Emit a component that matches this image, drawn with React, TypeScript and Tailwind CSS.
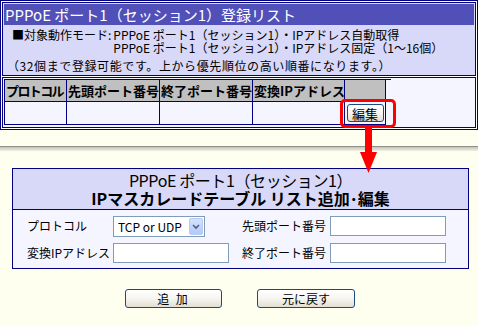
import React from "react";

function XpButton({ children, className = "" }: { children: React.ReactNode; className?: string }) {
  return (
    <div
      className={
        "flex items-center justify-center rounded-[3px] border border-[#1c4a80] bg-gradient-to-b from-white via-[#f6f5f0] to-[#e2dfd2] text-[12px] leading-none text-black " +
        className
      }
    >
      {children}
    </div>
  );
}

export default function App() {
  const headers = ["プロトコル", "先頭ポート番号", "終了ポート番号", "変換IPアドレス", ""];
  return (
    <div className="relative h-[326px] w-[478px] overflow-hidden bg-[#fffff0] font-['Noto_Sans_CJK_JP',sans-serif] text-black">
      {/* Top panel: list */}
      <div className="flex h-[130px] flex-col gap-px border border-[#000080] bg-white p-px">
        <div className="flex h-[74px] flex-col border border-[#000080] bg-[#d8d8f8] p-px">
          <div className="h-[21px] whitespace-nowrap bg-[#5050b8] pl-[1px] text-[15px] leading-[21px] text-white">
            PPPoE ポート1（セッション1）登録リスト
          </div>
          <div className="whitespace-nowrap pt-[3px] text-[12px] leading-[13px]">
            <div className="flex pl-[8px]">
              <span className="pr-[2px]">■対象動作モード:</span>
              <div className="flex flex-col">
                <span>PPPoE ポート1（セッション1）・IPアドレス自動取得</span>
                <span>PPPoE ポート1（セッション1）・IPアドレス固定（1～16個）</span>
              </div>
            </div>
            <div className="mt-[5px] pl-[3px] tracking-[0.6px]">
              （32個まで登録可能です。上から優先順位の高い順番になります。）
            </div>
          </div>
        </div>
        <div className="flex-1 border border-[#000080] bg-[#f5f5ff] p-px">
          <div className="grid w-[387px] grid-cols-[62px_93px_93px_92px_41px] border-l border-t border-[#000080]">
            {headers.map((h, i) => (
              <div
                key={i}
                className={
                  "flex h-[22px] items-center whitespace-nowrap border-b border-r border-[#000080] bg-[#c0c0c0] pl-[1px] text-[13px] font-bold leading-none " +
                  (i === 0 ? "tracking-[-1.6px]" : "")
                }
              >
                {h}
              </div>
            ))}
            {[0, 1, 2, 3].map((i) => (
              <div key={i} className="h-[23px] border-b border-r border-[#000080] bg-[#f5f5ff]" />
            ))}
            <div className="flex h-[23px] items-center justify-center border-b border-r border-[#000080] bg-[#f5f5ff]">
              <XpButton className="h-[18px] w-[37px] text-[13px]">編集</XpButton>
            </div>
          </div>
        </div>
      </div>

      {/* separator between screenshots */}
      <div className="mt-[16px] h-[5px] border-t border-[#909088] bg-gradient-to-b from-[#c4c4bc] to-[#f0f0e4]" />

      {/* Edit form */}
      <div className="ml-[12px] mt-[17px] w-[457px] border border-[#000080]">
        <div className="flex h-[41px] flex-col items-center justify-center border-b border-[#000080] bg-[#d8d8f8] text-[16px] leading-[18px]">
          <div className="whitespace-nowrap tracking-[-0.4px]">PPPoE ポート1（セッション1）</div>
          <div className="whitespace-nowrap font-bold">IPマスカレードテーブル リスト追加･編集</div>
        </div>
        <div className="grid grid-cols-[86px_116px_101px_116px] gap-y-[6px] bg-[#f5f5ff] pb-[5px] pl-[14px] pt-[6px] text-[12px]">
          <div className="flex h-[20px] items-center whitespace-nowrap">プロトコル</div>
          <div className="flex h-[21px] w-[92px] items-center border border-[#7f9db9] bg-white pl-[4px] pr-px">
            <span className="flex-1 whitespace-nowrap leading-none">TCP or UDP</span>
            <div className="flex h-[17px] w-[14px] items-center justify-center rounded-[2px] border border-[#b8cbf5] bg-gradient-to-b from-[#d6e2fd] to-[#b3c8f5]">
              <svg width="8" height="6" viewBox="0 0 8 6">
                <polyline points="1,1 4,4 7,1" fill="none" stroke="#4d6185" strokeWidth="1.6" />
              </svg>
            </div>
          </div>
          <div className="flex h-[20px] items-center whitespace-nowrap pl-[13px]">先頭ポート番号</div>
          <div className="h-[20px] w-[116px] border border-[#7f9db9] bg-white" />
          <div className="flex h-[20px] items-center whitespace-nowrap">変換IPアドレス</div>
          <div className="h-[20px] w-[116px] border border-[#7f9db9] bg-white" />
          <div className="flex h-[20px] items-center whitespace-nowrap pl-[13px]">終了ポート番号</div>
          <div className="h-[20px] w-[116px] border border-[#7f9db9] bg-white" />
        </div>
      </div>

      <div className="ml-[125px] mt-[20px] flex gap-[35px]">
        <XpButton className="h-[19px] w-[97px] tracking-[2px]">追 加</XpButton>
        <XpButton className="h-[19px] w-[98px]">元に戻す</XpButton>
      </div>

      {/* Red highlight and arrow overlay */}
      <div className="absolute left-[340px] top-[99px] h-[29px] w-[56px] rounded-[5px] border-[3px] border-[#ff0000]" />
      <div className="absolute left-[365px] top-[127px] h-[26px] w-[7px] bg-[#ff0000]" />
      <svg className="absolute left-[360px] top-[152px]" width="17" height="21" viewBox="0 0 17 21">
        <polygon points="0,0 17,0 8.5,21" fill="#ff0000" />
      </svg>
    </div>
  );
}
